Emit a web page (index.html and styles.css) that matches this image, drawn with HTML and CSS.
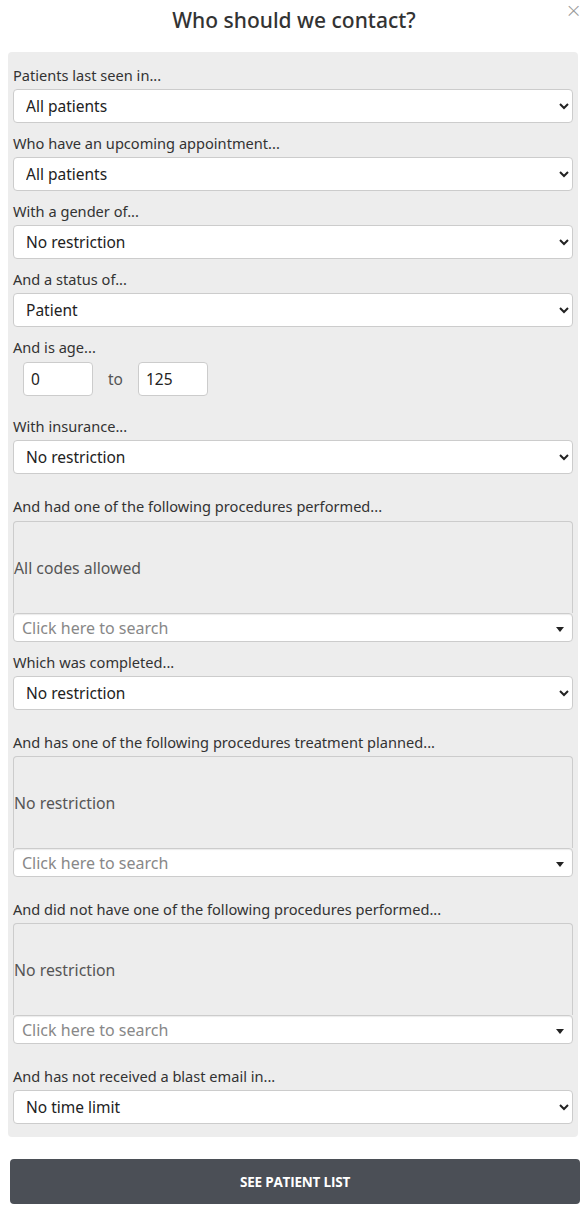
FILE: index.html
```
<!DOCTYPE html>
<html>
<head>
<meta charset="utf-8">
<link rel="stylesheet" href="styles.css">
</head>
<body>
<div class="modal">
  <div class="header">
    <h1 class="title">Who should we contact?</h1>
    <button class="close" aria-label="Close">&times;</button>
  </div>
  <form class="panel">
    <div class="group">
      <label class="label">Patients last seen in...</label>
      <select class="select"><option>All patients</option></select>
    </div>
    <div class="group">
      <label class="label">Who have an upcoming appointment...</label>
      <select class="select"><option>All patients</option></select>
    </div>
    <div class="group">
      <label class="label">With a gender of...</label>
      <select class="select"><option>No restriction</option></select>
    </div>
    <div class="group">
      <label class="label">And a status of...</label>
      <select class="select"><option>Patient</option></select>
    </div>
    <div class="group gap-lg">
      <label class="label label-loose">And is age...</label>
      <div class="age-row">
        <input class="age-input" type="text" value="0">
        <span class="age-to">to</span>
        <input class="age-input" type="text" value="125">
      </div>
    </div>
    <div class="group gap-xl">
      <label class="label">With insurance...</label>
      <select class="select"><option>No restriction</option></select>
    </div>
    <div class="group">
      <label class="label label-loose">And had one of the following procedures performed...</label>
      <div class="codes">All codes allowed</div>
      <div class="search"><span class="placeholder">Click here to search</span><span class="caret"></span></div>
    </div>
    <div class="group gap-xl">
      <label class="label">Which was completed...</label>
      <select class="select"><option>No restriction</option></select>
    </div>
    <div class="group gap-xl">
      <label class="label">And has one of the following procedures treatment planned...</label>
      <div class="codes">No restriction</div>
      <div class="search"><span class="placeholder">Click here to search</span><span class="caret"></span></div>
    </div>
    <div class="group gap-xl">
      <label class="label">And did not have one of the following procedures performed...</label>
      <div class="codes">No restriction</div>
      <div class="search"><span class="placeholder">Click here to search</span><span class="caret"></span></div>
    </div>
    <div class="group group-last">
      <label class="label">And has not received a blast email in...</label>
      <select class="select"><option>No time limit</option></select>
    </div>
  </form>
  <button class="submit" type="button">SEE PATIENT LIST</button>
</div>
</body>
</html>
```
FILE: styles.css
```
* { box-sizing: border-box; }
html, body { margin: 0; padding: 0; background: #fff; }
body {
  font-family: "Noto Sans", "Open Sans", sans-serif;
  color: #333;
}
.modal {
  padding: 0 6px 0 8px;
}
.header {
  position: relative;
  height: 52px;
  display: flex;
  justify-content: center;
}
.title {
  margin: 6px 0 0 0;
  font-size: 21px;
  font-weight: 500;
  line-height: 28px;
  color: #333;
}
.close {
  position: absolute;
  right: -2px;
  top: 0;
  border: 0;
  background: none;
  color: #999;
  font-size: 20px;
  line-height: 20px;
  padding: 0;
  font-family: "DejaVu Sans", sans-serif;
  font-weight: 300;
}
.panel {
  margin: 0 2px 0 0;
  background: #ededed;
  border-radius: 4px;
  padding: 13px 5px 13px 5px;
}
.group {
  margin-bottom: 10px;
}
.gap-lg { margin-bottom: 20px; }
.gap-xl { margin-bottom: 22px; }
.group-last { margin-bottom: 0; }
.label {
  display: block;
  font-size: 14.6px;
  line-height: 20px;
  color: #333;
  margin-bottom: 4px;
}
.label-loose { margin-bottom: 5px; }
.select {
  display: block;
  width: 100%;
  height: 34px;
  border: 1px solid #ccc;
  border-radius: 4px;
  background: #fff;
  font-family: "Noto Sans", "Open Sans", sans-serif;
  font-size: 15.5px;
  color: #222;
  padding: 0 8px;
}
.age-row {
  display: flex;
  align-items: center;
  padding-left: 10px;
}
.age-input {
  width: 70px;
  height: 34px;
  border: 1px solid #ccc;
  border-radius: 4px;
  background: #fff;
  font-family: "Noto Sans", "Open Sans", sans-serif;
  font-size: 15.5px;
  color: #222;
  padding: 0 7px;
}
.age-to {
  width: 45px;
  text-align: center;
  font-size: 15.5px;
  color: #555;
}
.codes {
  height: 92px;
  border: 1px solid #ccc;
  border-bottom: 0;
  border-radius: 4px 4px 0 0;
  display: flex;
  align-items: center;
  font-size: 15.8px;
  color: #555;
}
.search {
  height: 29px;
  border: 1px solid #ccc;
  border-radius: 4px;
  background: #fff;
  box-shadow: inset 0 1px 1px rgba(0,0,0,0.08);
  display: flex;
  align-items: center;
  justify-content: space-between;
  padding: 0 8px 0 8px;
}
.placeholder {
  font-size: 16px;
  color: #888;
}
.caret {
  width: 0;
  height: 0;
  border-left: 4px solid transparent;
  border-right: 4px solid transparent;
  border-top: 5px solid #222;
  margin-top: 3px;
}
.submit {
  display: block;
  width: calc(100% - 2px);
  margin: 22px 0 0 2px;
  height: 45px;
  border: 0;
  border-radius: 4px;
  background: #4b4f56;
  color: #fff;
  font-family: "Open Sans", "Noto Sans", sans-serif;
  font-weight: 700;
  font-size: 13.5px;
  letter-spacing: -0.2px;
}
```
